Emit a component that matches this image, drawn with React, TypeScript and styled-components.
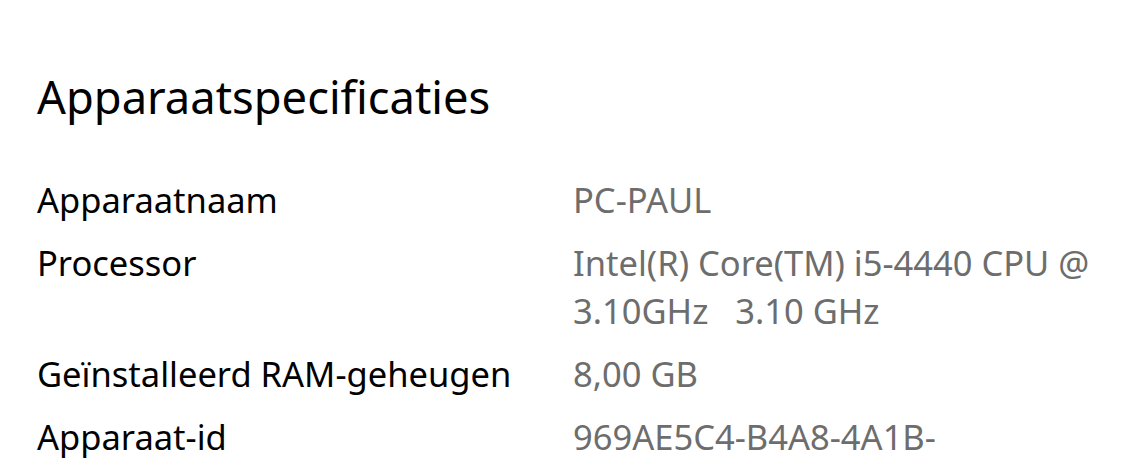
import React from "react";
import styled, { createGlobalStyle } from "styled-components";

const Global = createGlobalStyle`
  html, body { margin: 0; padding: 0; background: #ffffff; }
  body { font-family: "Noto Sans", "Open Sans", sans-serif; }
`;

const Page = styled.main`
  padding: 67px 0 0 37px;
  width: 1136px;
  height: 467px;
  box-sizing: border-box;
  overflow: hidden;
`;

const Heading = styled.h1`
  margin: 0 0 49px;
  font-size: 45.3px;
  font-weight: 400;
  line-height: 60px;
  color: #000;
`;

const Specs = styled.dl`
  display: grid;
  grid-template-columns: 536px 1fr;
  row-gap: 15px;
  margin: 0;
`;

const Label = styled.dt`
  margin: 0;
  font-size: 34.5px;
  line-height: 48px;
  color: #000;
`;

const Value = styled.dd`
  margin: 0;
  font-size: 34.5px;
  line-height: 48px;
  color: #6d6d6d;
  white-space: pre;
`;

const specs: [string, string][] = [
  ["Apparaatnaam", "PC-PAUL"],
  ["Processor", "Intel(R) Core(TM) i5-4440 CPU @\n3.10GHz   3.10 GHz"],
  ["Geïnstalleerd RAM-geheugen", "8,00 GB"],
  ["Apparaat-id", "969AE5C4-B4A8-4A1B-"],
];

export default function App() {
  return (
    <>
      <Global />
      <Page>
        <Heading>Apparaatspecificaties</Heading>
        <Specs>
          {specs.map(([k, v]) => (
            <React.Fragment key={k}>
              <Label>{k}</Label>
              <Value>{v}</Value>
            </React.Fragment>
          ))}
        </Specs>
      </Page>
    </>
  );
}
